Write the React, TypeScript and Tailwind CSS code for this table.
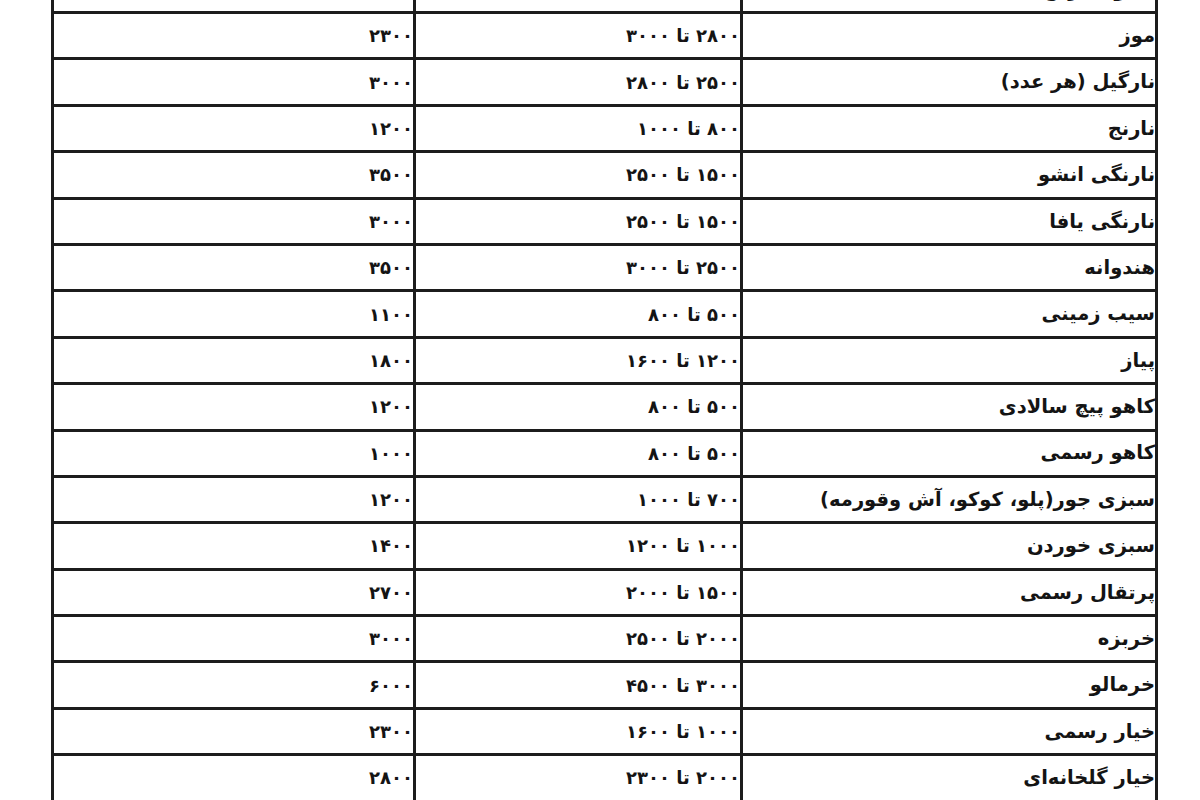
import React from "react";

const rows: [string, string, string][] = [
  ["لیمو شیرین", "", ""],
  ["موز", "۲۸۰۰ تا ۳۰۰۰", "۲۳۰۰"],
  ["نارگیل (هر عدد)", "۲۵۰۰ تا ۲۸۰۰", "۳۰۰۰"],
  ["نارنج", "۸۰۰ تا ۱۰۰۰", "۱۲۰۰"],
  ["نارنگی انشو", "۱۵۰۰ تا ۲۵۰۰", "۳۵۰۰"],
  ["نارنگی یافا", "۱۵۰۰ تا ۲۵۰۰", "۳۰۰۰"],
  ["هندوانه", "۲۵۰۰ تا ۳۰۰۰", "۳۵۰۰"],
  ["سیب زمینی", "۵۰۰ تا ۸۰۰", "۱۱۰۰"],
  ["پیاز", "۱۲۰۰ تا ۱۶۰۰", "۱۸۰۰"],
  ["کاهو پیچ سالادی", "۵۰۰ تا ۸۰۰", "۱۲۰۰"],
  ["کاهو رسمی", "۵۰۰ تا ۸۰۰", "۱۰۰۰"],
  ["سبزی جور(پلو، کوکو، آش وقورمه)", "۷۰۰ تا ۱۰۰۰", "۱۲۰۰"],
  ["سبزی خوردن", "۱۰۰۰ تا ۱۲۰۰", "۱۴۰۰"],
  ["پرتقال رسمی", "۱۵۰۰ تا ۲۰۰۰", "۲۷۰۰"],
  ["خربزه", "۲۰۰۰ تا ۲۵۰۰", "۳۰۰۰"],
  ["خرمالو", "۳۰۰۰ تا ۴۵۰۰", "۶۰۰۰"],
  ["خیار رسمی", "۱۰۰۰ تا ۱۶۰۰", "۲۳۰۰"],
  ["خیار گلخانه‌ای", "۲۰۰۰ تا ۲۳۰۰", "۲۸۰۰"],
];

export default function App() {
  return (
    <div
      className="w-[1200px] h-[800px] overflow-hidden bg-white text-[#141414]"
      style={{ fontFamily: '"DejaVu Sans", sans-serif' }}
    >
      <div className="ml-[51px] w-[1107px] -mt-[32.4px] border-x-[3px] border-[#1c1c1c]">
        {rows.map(([name, range, price], i) => (
          <div
            key={i}
            className="grid grid-cols-[362px_327px_1fr] h-[46.4px] border-b-[3px] border-[#1c1c1c]"
          >
            <div
              dir="rtl"
              className="flex items-center pt-[1px] border-r-[3px] border-[#1c1c1c] text-[18px] font-bold leading-none"
            >
              {price}
            </div>
            <div
              dir="rtl"
              className="flex items-center pt-[1px] border-r-[3px] border-[#1c1c1c] text-[18px] font-bold leading-none"
            >
              {range}
            </div>
            <div
              dir="rtl"
              className="flex items-center text-[19.5px] font-bold leading-none whitespace-nowrap"
            >
              {name}
            </div>
          </div>
        ))}
      </div>
    </div>
  );
}
